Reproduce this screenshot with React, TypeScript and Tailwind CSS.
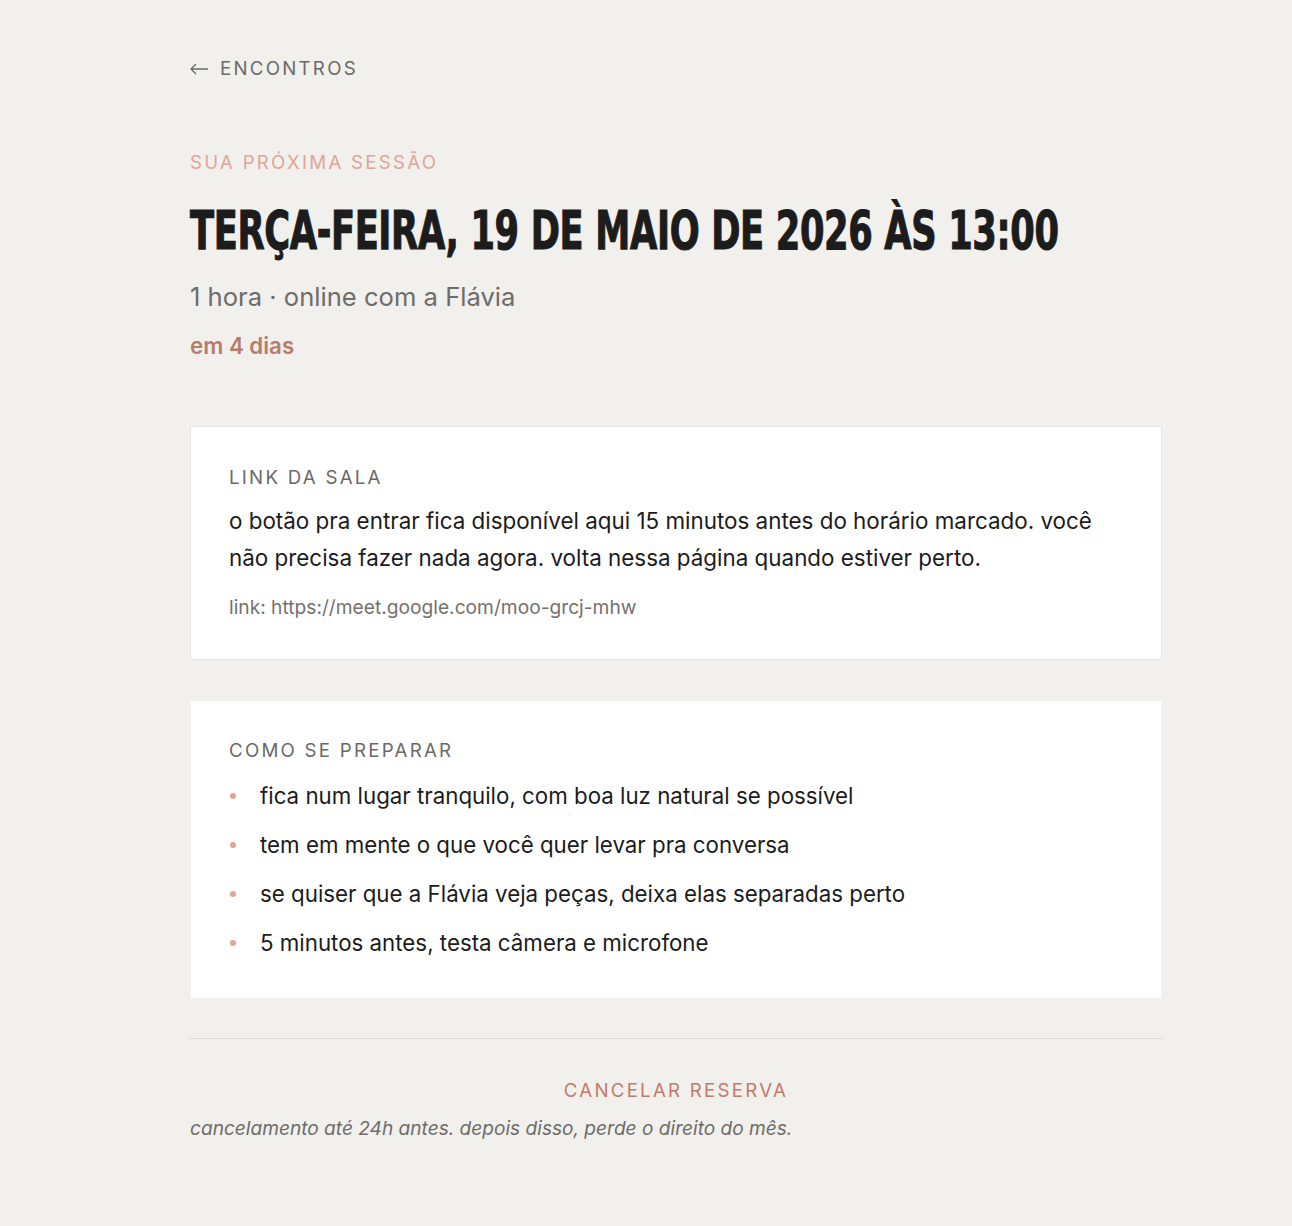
const prep = [
  "fica num lugar tranquilo, com boa luz natural se possível",
  "tem em mente o que você quer levar pra conversa",
  "se quiser que a Flávia veja peças, deixa elas separadas perto",
  "5 minutos antes, testa câmera e microfone",
];

export default function App() {
  return (
    <div className="min-h-screen w-full bg-[#f1f0ed] font-['Inter','Liberation_Sans',sans-serif] text-[#1c1c1c]">
      <div className="ml-[190px] w-[972px] pt-[56px] pb-[80px]">
        {/* back link */}
        <a className="flex items-center gap-[12px] text-[18.7px] tracking-[0.12em] text-[#6b6967] uppercase leading-[26px]">
          <svg width="18" height="12" viewBox="0 0 18 12" fill="none" stroke="#6b6967" strokeWidth="1.3">
            <path d="M1 6h17M6 1L1 6l5 5" />
          </svg>
          <span>Encontros</span>
        </a>

        {/* header */}
        <div className="mt-[68px] text-[18.7px] tracking-[0.12em] uppercase text-[#e0a597] leading-[26px]">
          Sua próxima sessão
        </div>
        <h1 className="mt-[20px] h-[70px] whitespace-nowrap font-['DejaVu_Sans',sans-serif] font-bold text-[53px] leading-[70px] uppercase tracking-[-0.01em] text-[#1c1c1c] [-webkit-text-stroke:1.2px_#1c1c1c] origin-left scale-x-[0.665]">
          Terça-feira, 19 de maio de 2026 às 13:00
        </h1>
        <p className="mt-[14px] text-[25.6px] leading-[34px] text-[#6e6c69]">1 hora · online com a Flávia</p>
        <p className="mt-[17px] text-[22.3px] leading-[30px] font-semibold text-[#b97b6c]">em 4 dias</p>

        {/* room link */}
        <section className="mt-[65px] bg-white border border-[#e6e4e0] px-[38px] pt-[37px] pb-[39px]">
          <h2 className="text-[18.7px] tracking-[0.12em] uppercase text-[#6b6967] leading-[28px]">Link da sala</h2>
          <p className="mt-[10px] text-[22.4px] leading-[37px] text-[#1c1c1c]">
            o botão pra entrar fica disponível aqui 15 minutos antes do horário marcado. você não precisa fazer nada agora. volta nessa página quando estiver perto.
          </p>
          <p className="mt-[18px] text-[19.2px] leading-[26px] text-[#73716e]">link: https://meet.google.com/moo-grcj-mhw</p>
        </section>

        {/* prep */}
        <section className="mt-[40px] bg-white border border-[#f1f0ed] px-[38px] pt-[36px] pb-[37px]">
          <h2 className="text-[18.7px] tracking-[0.12em] uppercase text-[#6b6967] leading-[28px]">Como se preparar</h2>
          <ul className="mt-[13px] flex flex-col gap-[13px]">
            {prep.map((t) => (
              <li key={t} className="flex items-center text-[22.3px] leading-[36px] text-[#1c1c1c]">
                <span className="w-[6px] h-[6px] shrink-0 rounded-full bg-[#e0a597] ml-[1px] mr-[24px]" />
                {t}
              </li>
            ))}
          </ul>
        </section>

        <div className="mt-[39px] border-t border-[#dcdad6]" />

        <div className="mt-[39px] flex justify-center">
          <button className="text-[18.7px] tracking-[0.12em] uppercase text-[#c17b6b] leading-[26px]">Cancelar reserva</button>
        </div>
        <p className="mt-[11px] text-[19.1px] italic text-[#6e6c69] leading-[26px]">
          cancelamento até 24h antes. depois disso, perde o direito do mês.
        </p>
      </div>
    </div>
  );
}
